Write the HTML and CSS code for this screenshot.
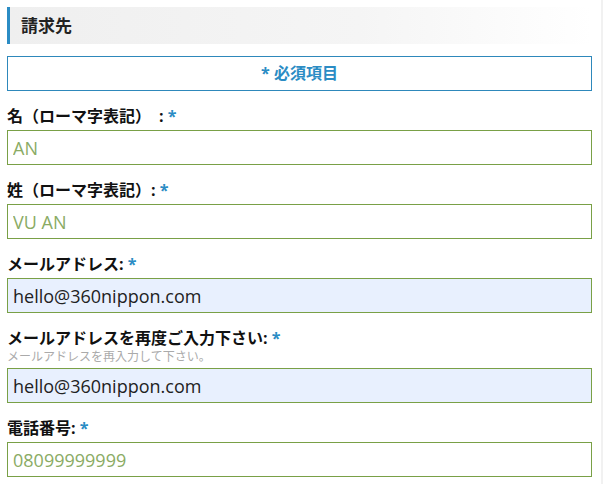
FILE: index.html
```html
<!DOCTYPE html>
<html lang="ja">
<head>
    <meta charset="UTF-8">
    <meta name="viewport" content="width=device-width, initial-scale=1.0">
    <title>請求先</title>
    <link rel="stylesheet" href="styles.css">
</head>
<body>
    <div class="page">
        <form class="billing">
            <h3 class="section-title">請求先</h3>

            <div class="required-note"><span class="star">*</span> 必須項目</div>

            <div class="field">
                <label for="firstName">名（ローマ字表記）　: <span class="star">*</span></label>
                <input id="firstName" type="text" placeholder="AN">
            </div>

            <div class="field">
                <label for="lastName">姓（ローマ字表記）: <span class="star">*</span></label>
                <input id="lastName" type="text" placeholder="VU AN">
            </div>

            <div class="field">
                <label for="email">メールアドレス: <span class="star">*</span></label>
                <input id="email" class="filled" type="email" value="hello@360nippon.com">
            </div>

            <div class="field">
                <label for="email2">メールアドレスを再度ご入力下さい: <span class="star">*</span></label>
                <span class="hint">メールアドレスを再入力して下さい。</span>
                <input id="email2" class="filled" type="email" value="hello@360nippon.com">
            </div>

            <div class="field">
                <label for="phone">電話番号: <span class="star">*</span></label>
                <input id="phone" type="tel" placeholder="08099999999">
            </div>
        </form>
    </div>
</body>
</html>
```

FILE: styles.css
```css
body {
    margin: 0;
    font-family: "Open Sans", "Noto Sans CJK JP", sans-serif;
    color: #222;
    background-color: #fff;
}
.page {
    width: 601px;
    min-height: 484px;
    border-right: 2px solid #f1f1f1;
}
.billing {
    width: 585px;
    margin-left: 7px;
    padding-top: 7px;
}
.section-title {
    margin: 0;
    height: 37px;
    line-height: 37px;
    padding-left: 11px;
    border-left: 3px solid #2b8cc4;
    background: linear-gradient(to right, #efefef, #f5f5f5 60%, #fff 100%);
    font-size: 17px;
    font-weight: bold;
    color: #222;
}
.required-note {
    margin-top: 12px;
    height: 35px;
    line-height: 33px;
    box-sizing: border-box;
    border: 1px solid #2e88bb;
    text-align: center;
    font-size: 16px;
    font-weight: bold;
    color: #2b8cc4;
}
.star {
    color: #2b8cc4;
    font-weight: bold;
}
.field {
    margin-top: 14px;
}
.field label {
    display: block;
    line-height: 22px;
    margin-bottom: 3px;
    font-size: 16px;
    font-weight: bold;
    color: #111;
}
.hint {
    display: block;
    margin-top: -4px;
    margin-bottom: 3px;
    line-height: 17px;
    font-size: 12px;
    color: #aaa;
}
.field input {
    display: block;
    width: 100%;
    height: 35px;
    box-sizing: border-box;
    margin: 0;
    padding: 0 5px;
    border: 1px solid #79a046;
    border-radius: 0;
    outline: none;
    font-family: "Open Sans", "Noto Sans CJK JP", sans-serif;
    font-size: 18px;
    color: #222;
    background-color: #fff;
}
.field input::placeholder {
    color: #8aab64;
    opacity: 1;
}
.field input.filled {
    background-color: #e8f0fe;
}
```
